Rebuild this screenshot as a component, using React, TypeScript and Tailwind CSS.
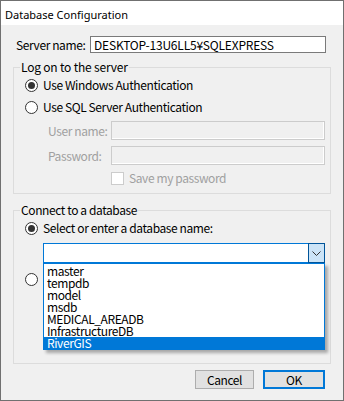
import React from 'react';

const ui = "font-['Noto_Sans_CJK_JP',sans-serif] text-[12px] leading-[14px] tracking-[-0.4px] text-black whitespace-nowrap";

const Radio: React.FC<{ checked?: boolean }> = ({ checked }) => (
  <span className="w-[13px] h-[13px] rounded-full border border-[#333333] bg-white flex items-center justify-center shrink-0">
    {checked && <span className="w-[7px] h-[7px] rounded-full bg-[#333333]" />}
  </span>
);

const databases = ['master', 'tempdb', 'model', 'msdb', 'MEDICAL_AREADB', 'InfrastructureDB', 'RiverGIS'];

export default function App() {
  return (
    <div className={`w-[344px] h-[401px] border border-[#707070] bg-[#f0f0f0] flex flex-col ${ui}`}>
      {/* title bar */}
      <div className="h-[24px] bg-white flex items-center pl-[4px] pt-[3px] font-['Noto_Sans',sans-serif] text-[11px] tracking-normal">
        Database Configuration
      </div>

      <div className="flex flex-col pl-[12px]">
        {/* server name */}
        <div className="flex items-center mt-[11px] ml-[3px]">
          <span className="w-[74px]">Server name:</span>
          <div className="w-[236px] h-[17px] border border-[#7a7a7a] bg-white flex items-center pl-[3px] tracking-[-0.2px]">
            DESKTOP-13U6LL5¥SQLEXPRESS
          </div>
        </div>

        {/* log on group */}
        <fieldset className="w-[318px] border border-[#dcdcdc] mt-[7px] pb-[8px]">
          <legend className="ml-[6px] px-[1px] tracking-[-0.2px]">Log on to the server</legend>
          <div className="flex items-center h-[22px] ml-[11px] gap-[5px]">
            <Radio checked />
            <span>Use Windows Authentication</span>
          </div>
          <div className="flex items-center h-[22px] ml-[11px] gap-[5px]">
            <Radio />
            <span>Use SQL Server Authentication</span>
          </div>
          <div className="flex items-center ml-[34px] mt-[3px] text-[#a0a0a0]">
            <span className="w-[63px]">User name:</span>
            <div className="w-[214px] h-[19px] border border-[#cccccc] bg-[#f0f0f0] shadow-[inset_-1px_-1px_0_#ffffff]" />
          </div>
          <div className="flex items-center ml-[34px] mt-[6px] text-[#a0a0a0]">
            <span className="w-[63px]">Password:</span>
            <div className="w-[214px] h-[19px] border border-[#cccccc] bg-[#f0f0f0] shadow-[inset_-1px_-1px_0_#ffffff]" />
          </div>
          <div className="flex items-center ml-[97px] mt-[6px] gap-[5px] text-[#a0a0a0]">
            <span className="w-[13px] h-[13px] border border-[#cccccc] bg-white" />
            <span>Save my password</span>
          </div>
        </fieldset>

        {/* database group */}
        <fieldset className="w-[318px] h-[161px] border border-[#dcdcdc] mt-[9px]">
          <legend className="ml-[6px] px-[1px]">Connect to a database</legend>
          <div className="flex items-center h-[22px] ml-[11px] gap-[5px]">
            <Radio checked />
            <span>Select or enter a database name:</span>
          </div>
          <div className="relative ml-[29px] mt-[4px] w-[282px] h-[20px] border border-[#0078d7] bg-white flex justify-end">
            <div className="w-[17px] h-[20px] -mt-[1px] -mr-[1px] border border-[#005499] bg-[#cce4f7] flex items-center justify-center">
              <svg width="9" height="5" viewBox="0 0 9 5">
                <path d="M0.5 0.5 L4.5 4.5 L8.5 0.5" fill="none" stroke="#333333" strokeWidth="1" />
              </svg>
            </div>
            <ul className="absolute left-[-1px] top-[19px] w-[282px] border border-[#0078d7] bg-white pt-[1px] z-10 shadow-[3px_3px_3px_rgba(0,0,0,0.3)]">
              {databases.map((d) => (
                <li
                  key={d}
                  className={`h-[12px] leading-[12px] pl-[3px] ${d === 'RiverGIS' ? 'bg-[#0078d7] text-white' : ''}`}
                >
                  {d}
                </li>
              ))}
            </ul>
          </div>
          <div className="flex items-center h-[22px] ml-[11px] gap-[5px] mt-[5px]">
            <Radio />
          </div>
        </fieldset>

        {/* buttons */}
        <div className="flex gap-[9px] mt-[6px] ml-[182px]">
          <button className="w-[59px] h-[19px] border border-[#adadad] bg-[#e1e1e1] leading-[14px]">Cancel</button>
          <button className="w-[62px] h-[19px] border-2 border-[#0078d7] bg-[#e1e1e1] leading-[14px]">OK</button>
        </div>
      </div>
    </div>
  );
}
